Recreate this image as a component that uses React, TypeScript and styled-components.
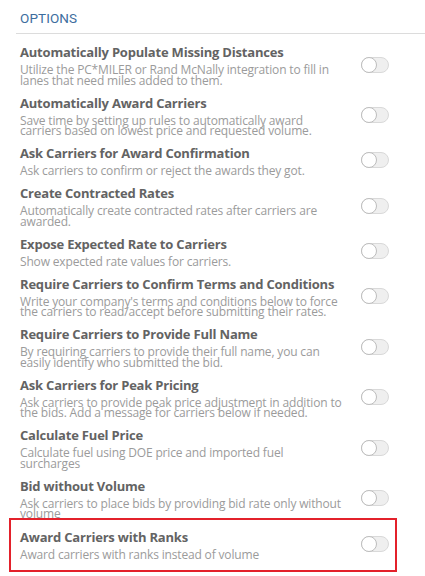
import React from "react";
import styled, { createGlobalStyle } from "styled-components";

const GlobalStyle = createGlobalStyle`
  html, body { margin: 0; padding: 0; background: #ffffff; }
  body { font-family: "Open Sans", "Liberation Sans", sans-serif; }
  * { box-sizing: border-box; }
`;

const Page = styled.div`
  width: 425px;
  background: #ffffff;
`;

const Header = styled.div`
  margin-left: 16px;
  padding: 11px 0 7px 4px;
  border-bottom: 1px solid #dcdcdc;
  font-family: Roboto, "Liberation Sans", sans-serif;
  font-size: 13.5px;
  line-height: 15px;
  color: #3d6d9e;
  text-transform: uppercase;
  letter-spacing: 0.1px;
`;

const List = styled.div`
  display: flex;
  flex-direction: column;
  gap: 7.5px;
  padding: 9.2px 36px 0 20px;
`;

const Row = styled.div`
  display: flex;
  align-items: center;
  gap: 17px;
`;

const Highlight = styled.div`
  position: relative;
  z-index: 1;
  margin: -9.2px -8px 0 -11px;
  padding: 8px 6px 9px 9px;
  border: 2px solid #e3212b;
  background: #ffffff;
`;

const TextBlock = styled.div`
  flex: 1;
  min-width: 0;
`;

const Title = styled.div`
  font-size: 13px;
  font-weight: 700;
  line-height: 18px;
  letter-spacing: -0.2px;
  color: #636363;
  margin-bottom: 4px;
  white-space: nowrap;
`;

const Desc = styled.div`
  font-size: 12px;
  line-height: 10.5px;
  letter-spacing: -0.16px;
  color: #9b9b9b;
`;

const Track = styled.span<{ $on?: boolean }>`
  position: relative;
  flex: none;
  width: 28px;
  height: 16px;
  border-radius: 8px;
  background: ${(p) => (p.$on ? "#3d6d9e" : "#efefef")};
  border: 1px solid #d9d9d9;
`;

const Knob = styled.span`
  position: absolute;
  top: -1px;
  left: -1px;
  width: 16px;
  height: 16px;
  border-radius: 50%;
  background: #ffffff;
  border: 1px solid #bdbdbd;
`;

const Toggle = () => (
  <Track>
    <Knob />
  </Track>
);

type Option = { title: string; desc: string };

const options: Option[] = [
  {
    title: "Automatically Populate Missing Distances",
    desc: "Utilize the PC*MILER or Rand McNally integration to fill in lanes that need miles added to them.",
  },
  {
    title: "Automatically Award Carriers",
    desc: "Save time by setting up rules to automatically award carriers based on lowest price and requested volume.",
  },
  {
    title: "Ask Carriers for Award Confirmation",
    desc: "Ask carriers to confirm or reject the awards they got.",
  },
  {
    title: "Create Contracted Rates",
    desc: "Automatically create contracted rates after carriers are awarded.",
  },
  {
    title: "Expose Expected Rate to Carriers",
    desc: "Show expected rate values for carriers.",
  },
  {
    title: "Require Carriers to Confirm Terms and Conditions",
    desc: "Write your company's terms and conditions below to force the carriers to read/accept before submitting their rates.",
  },
  {
    title: "Require Carriers to Provide Full Name",
    desc: "By requiring carriers to provide their full name, you can easily identify who submitted the bid.",
  },
  {
    title: "Ask Carriers for Peak Pricing",
    desc: "Ask carriers to provide peak price adjustment in addition to the bids. Add a message for carriers below if needed.",
  },
  {
    title: "Calculate Fuel Price",
    desc: "Calculate fuel using DOE price and imported fuel surcharges",
  },
  {
    title: "Bid without Volume",
    desc: "Ask carriers to place bids by providing bid rate only without volume",
  },
];

const OptionRow = ({ title, desc }: Option) => (
  <Row>
    <TextBlock>
      <Title>{title}</Title>
      <Desc>{desc}</Desc>
    </TextBlock>
    <Toggle />
  </Row>
);

export default function App() {
  return (
    <Page>
      <GlobalStyle />
      <Header>Options</Header>
      <List>
        {options.map((o) => (
          <OptionRow key={o.title} {...o} />
        ))}
        <Highlight>
          <OptionRow
            title="Award Carriers with Ranks"
            desc="Award carriers with ranks instead of volume"
          />
        </Highlight>
      </List>
    </Page>
  );
}
